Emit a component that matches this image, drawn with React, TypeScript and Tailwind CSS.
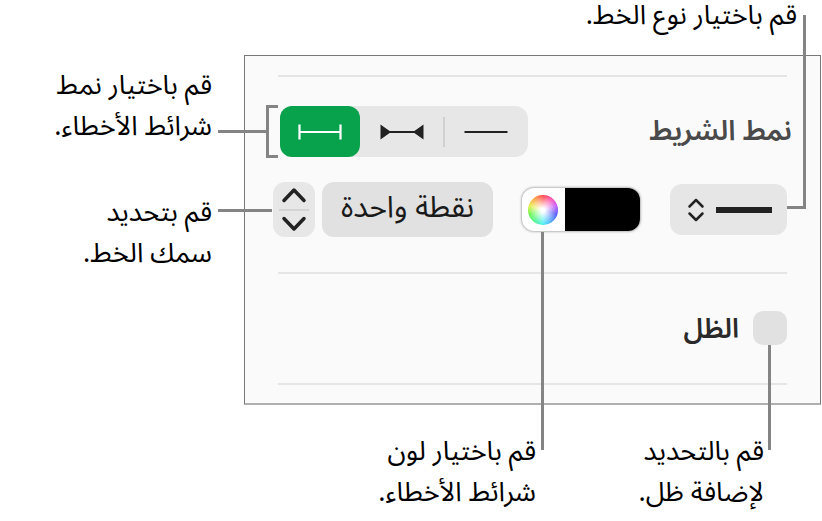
import { useState } from "react";
import clsx from "clsx";

const CAPTION = "text-[27px] leading-[41px] text-black whitespace-nowrap";
const LEADER = "absolute pointer-events-none bg-[#848484]";

const capStyles = [
  {
    id: "line",
    label: "خط",
    width: "w-[85px]",
    icon: (
      <svg width="44" height="20" viewBox="0 0 44 20" fill="none">
        <path d="M0.5 10H43.5" stroke="currentColor" strokeWidth="2" />
      </svg>
    ),
  },
  {
    id: "arrow",
    label: "سهم",
    width: "w-[83px]",
    icon: (
      <svg width="44" height="20" viewBox="0 0 44 20" fill="none">
        <path d="M8 10H36" stroke="currentColor" strokeWidth="2" />
        <path d="M0.5 2.5V17.5L11 10ZM43.5 2.5V17.5L33 10Z" fill="currentColor" />
      </svg>
    ),
  },
  {
    id: "bar",
    label: "شريط",
    width: "w-[80px]",
    icon: (
      <svg width="44" height="20" viewBox="0 0 44 20" fill="none">
        <path
          d="M1.5 2.5V17.5M42.5 2.5V17.5M1.5 10H42.5"
          stroke="currentColor"
          strokeWidth="2.2"
        />
      </svg>
    ),
  },
];

const Divider = () => <hr className="mx-[5px] h-[2px] border-0 bg-[#e5e5e5]" />;

const BarStyle = () => {
  const [style, setStyle] = useState("bar");

  return (
    <div
      role="radiogroup"
      aria-labelledby="bar-style"
      className="relative ml-[7px] flex h-[51px] rounded-[13px] bg-[#e7e7e7]"
    >
      {capStyles.map((item) => (
        <label
          key={item.id}
          className={clsx(
            "relative flex items-center justify-center rounded-[12px] cursor-pointer",
            item.width,
            style === item.id ? "bg-[#09a24c] text-white" : "text-[#222]"
          )}
        >
          <input
            type="radio"
            name="bar-style"
            aria-label={item.label}
            className="sr-only"
            checked={style === item.id}
            onChange={() => setStyle(item.id)}
          />
          {item.icon}
          {item.id === "line" && (
            <span className="absolute left-0 top-[11px] h-[30px] w-[2px] bg-[#d0d0d0]" />
          )}
        </label>
      ))}
      <span className="pointer-events-none absolute -left-[14px] -top-px h-[53px] w-[12px] border-[3px] border-r-0 border-[#848484]" />
      <span className={clsx(LEADER, "-left-[62px] top-[24px] h-[3px] w-[48px]")} />
    </div>
  );
};

const LineType = () => (
  <div className="relative mr-[5px]">
    <button
      type="button"
      aria-label="نوع الخط"
      aria-haspopup="listbox"
      className="flex h-[51px] w-[117px] items-center justify-between rounded-[12px] bg-[#e6e6e6] pl-[17px] pr-[15px] text-[#222]"
    >
      <svg width="56" height="8" viewBox="0 0 56 8">
        <rect y="1" width="56" height="6" fill="currentColor" />
      </svg>
      <svg
        width="18"
        height="24"
        viewBox="0 0 18 24"
        fill="none"
        stroke="currentColor"
        strokeWidth="2.5"
        strokeLinecap="round"
        strokeLinejoin="round"
      >
        <path d="M2.5 8.5L9 2L15.5 8.5M2.5 15.5L9 22L15.5 15.5" />
      </svg>
    </button>
    <span className="pointer-events-none absolute -right-[19px] -top-[169px] h-[194px] w-[19px] border-b-[3px] border-r-[3px] border-[#848484]" />
  </div>
);

const ColorWell = () => {
  const [color, setColor] = useState("#000000");

  return (
    <div className="relative mr-[2px]">
      <div className="flex h-[43px] w-[118px] overflow-hidden rounded-[12px] bg-white shadow-[0_0_3px_rgba(0,0,0,0.55)]">
        <input
          type="color"
          aria-label="اللون"
          value={color}
          onChange={(e) => setColor(e.target.value)}
          className="h-full min-w-0 flex-1 appearance-none border-0 p-0 [&::-webkit-color-swatch-wrapper]:p-0 [&::-webkit-color-swatch]:border-0 [&::-webkit-color-swatch]:rounded-none"
        />
        <button
          type="button"
          aria-label="عجلة الألوان"
          className="flex w-[43px] items-center justify-center"
        >
          <span className="size-[30px] rounded-full bg-[radial-gradient(circle,#fff_8%,rgba(255,255,255,0)_72%),conic-gradient(#ff4040,#ff48a8,#c050f8,#4a50f8,#45a5ff,#45eef5,#45f58a,#62f545,#e4ee40,#ff9a3c,#ff4040)]" />
        </button>
      </div>
      <span className={clsx(LEADER, "left-[19px] top-[44px] h-[218px] w-[3px]")} />
    </div>
  );
};

const LineWidth = () => {
  const [width, setWidth] = useState("نقطة واحدة");

  return (
    <div className="flex gap-[7px]">
      <input
        type="text"
        aria-label="سمك الخط"
        value={width}
        onChange={(e) => setWidth(e.target.value)}
        className="h-[55px] w-[171px] rounded-[12px] bg-[#e1e1e1] pb-1 text-center text-[30px] text-[#1a1a1a]"
      />
      <div className="relative flex h-[55px] w-[42px] flex-col rounded-[12px] bg-[#e7e7e7] text-[#222]">
        <button
          type="button"
          aria-label="زيادة"
          className="mx-[6px] flex flex-1 items-center justify-center border-b-2 border-[#d4d4d4]"
        >
          <svg
            width="26"
            height="16"
            viewBox="0 0 26 16"
            fill="none"
            stroke="currentColor"
            strokeWidth="3.5"
            strokeLinecap="round"
            strokeLinejoin="round"
          >
            <path d="M3 13.5L13 3L23 13.5" />
          </svg>
        </button>
        <button
          type="button"
          aria-label="إنقاص"
          className="flex flex-1 items-center justify-center"
        >
          <svg
            width="26"
            height="16"
            viewBox="0 0 26 16"
            fill="none"
            stroke="currentColor"
            strokeWidth="3.5"
            strokeLinecap="round"
            strokeLinejoin="round"
          >
            <path d="M3 2.5L13 13L23 2.5" />
          </svg>
        </button>
        <span className={clsx(LEADER, "-left-[55px] top-[27px] h-[3px] w-[54px]")} />
      </div>
    </div>
  );
};

const Shadow = () => {
  const [checked, setChecked] = useState(false);

  return (
    <div className="relative mr-[5px] flex items-center gap-[14px]">
      <input
        id="shadow"
        type="checkbox"
        checked={checked}
        onChange={(e) => setChecked(e.target.checked)}
        className="size-[34px] appearance-none rounded-[10px] bg-[#e1e1e1] checked:bg-[#09a24c]"
      />
      <label
        htmlFor="shadow"
        className="text-[27px] leading-[34px] font-semibold text-[#2a2a2a]"
      >
        الظل
      </label>
      <span className={clsx(LEADER, "right-[16px] top-[34px] h-[105px] w-[3px]")} />
    </div>
  );
};

const App = () => {
  return (
    <main
      dir="rtl"
      className="min-h-screen bg-white pr-px font-['Noto_Sans','Noto_Sans_Arabic',sans-serif]"
    >
      <p className="h-[55px] pr-6 text-[27px] leading-[28px] whitespace-nowrap text-black">
        قم باختيار نوع الخط.
      </p>

      <div className="flex">
        <section className="min-w-0 flex-1 border border-b-2 border-[#777] border-b-[#b0b0b0] bg-[#fafafa] px-[28px] pb-[18px] pt-[19px]">
          <Divider />
          <div className="mt-[29px] flex items-start justify-between">
            <h2
              id="bar-style"
              className="text-[28px] leading-[46px] font-semibold text-[#4a4a4a]"
            >
              نمط الشريط
            </h2>
            <BarStyle />
          </div>
          <div className="mb-[35px] mt-[25px] flex items-center justify-between">
            <LineType />
            <ColorWell />
            <LineWidth />
          </div>
          <Divider />
          <div className="mb-[38px] mt-[37px]">
            <Shadow />
          </div>
          <Divider />
        </section>

        <aside className="flex w-[244px] flex-col gap-[45px] pr-8 pt-2">
          <p className={CAPTION}>
            قم باختيار نمط
            <br />
            شرائط الأخطاء.
          </p>
          <p className={CAPTION}>
            قم بتحديد
            <br />
            سمك الخط.
          </p>
        </aside>
      </div>

      <div className="flex pr-[57px] pt-6">
        <p className={clsx(CAPTION, "w-[228px]")}>
          قم بالتحديد
          <br />
          لإضافة ظل.
        </p>
        <p className={CAPTION}>
          قم باختيار لون
          <br />
          شرائط الأخطاء.
        </p>
      </div>
    </main>
  );
};

export default App;
